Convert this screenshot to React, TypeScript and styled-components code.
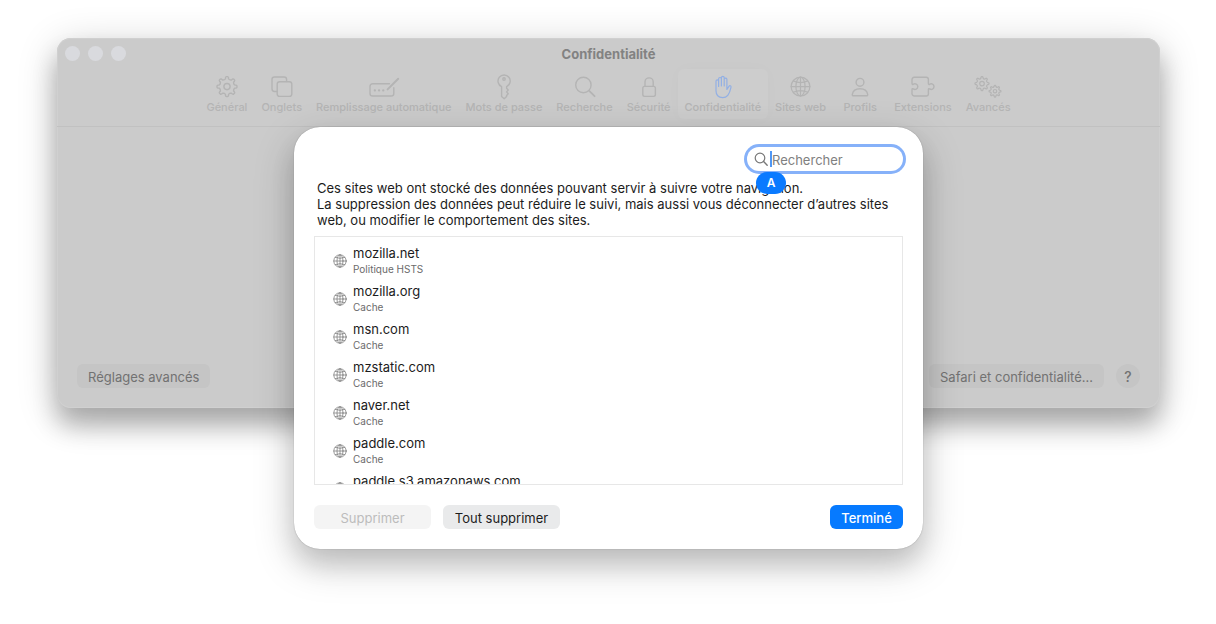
import React from "react";
import styled, { createGlobalStyle, css } from "styled-components";

const GlobalStyle = createGlobalStyle`
  *, *::before, *::after { box-sizing: border-box; }
  body {
    margin: 0;
    background: #fff;
    font-family: Inter, "Liberation Sans", sans-serif;
    font-size: 13px;
    line-height: 16px;
    color: #1c1c1c;
  }
  button, input { font: inherit; }
`;

const Stage = styled.main`
  display: grid;
  padding: 38px 56px 75px 57px;
`;

const Window = styled.section`
  grid-area: 1 / 1;
  align-self: start;
  display: flex;
  flex-direction: column;
  min-width: 0;
  min-height: 370px;
  border-radius: 14px;
  background: #cbcbcb;
  box-shadow:
    inset 0 0 0 1px #d0d0d0,
    0 18px 24px rgba(0, 0, 0, 0.24),
    0 8px 40px rgba(0, 0, 0, 0.2);
`;

const TitleBar = styled.header`
  display: grid;
  grid-template-columns: 1fr auto 1fr;
  align-items: center;
  height: 31px;
  padding: 0 8px;
`;

const Lights = styled.div`
  display: flex;
  gap: 8px;
`;

const Light = styled.button`
  width: 15px;
  height: 15px;
  padding: 0;
  border: 0;
  border-radius: 50%;
  background: #d9dade;
`;

const Title = styled.h1`
  margin: 0;
  font-size: 13px;
  font-weight: 700;
  line-height: 16px;
  color: #828282;
`;

const Toolbar = styled.nav`
  display: flex;
  justify-content: center;
  padding-bottom: 7px;
  border-bottom: 1px solid #c1c1c1;
`;

const Tab = styled.button<{ $active?: boolean }>`
  display: flex;
  flex-direction: column;
  align-items: center;
  min-width: 54px;
  padding: 5px 7px;
  border: 0;
  border-radius: 6px;
  background: transparent;
  color: #b4b4b4;
  font-size: 11px;
  font-weight: 500;
  line-height: 14px;
  white-space: nowrap;
  ${(p) =>
    p.$active &&
    css`
      background: #cdcdcd;
      box-shadow: 0 0 16px rgba(0, 0, 0, 0.02);
      svg { color: #93b0e4; }
    `}
`;

const WindowFooter = styled.footer`
  display: flex;
  align-items: center;
  gap: 12px;
  margin-top: auto;
  padding: 20px;
`;

const GreyButton = styled.button<{ $end?: boolean }>`
  height: 24px;
  margin-left: ${(p) => (p.$end ? "auto" : "0")};
  padding: 2px 11px 0;
  border: 0;
  border-radius: 6px;
  background: #c5c5c5;
  color: #727272;
`;

const HelpButton = styled(GreyButton)`
  width: 24px;
  padding: 2px 0 0;
  border-radius: 50%;
  font-size: 14px;
  font-weight: 500;
`;

const Sheet = styled.section`
  grid-area: 1 / 1;
  place-self: start center;
  display: flex;
  flex-direction: column;
  width: 100%;
  max-width: 629px;
  margin-top: 89px;
  padding: 20px;
  border-radius: 26px;
  background: #fff;
  box-shadow:
    0 0 1px rgba(0, 0, 0, 0.4),
    0 16px 24px rgba(0, 0, 0, 0.1),
    0 14px 40px rgba(0, 0, 0, 0.22);
`;

const Search = styled.label`
  position: relative;
  align-self: flex-end;
  display: flex;
  align-items: center;
  width: 156px;
  height: 24px;
  padding-left: 6px;
  border-radius: 12px;
  background: #fff;
  color: #777;
  box-shadow: 0 0 0 3px #86b1f9;
`;

const Caret = styled.span`
  width: 2px;
  height: 16px;
  margin-left: 1px;
  background: #4f97f5;
`;

const SearchInput = styled.input`
  flex: 1;
  min-width: 0;
  padding: 1px 0 0;
  border: 0;
  outline: 0;
  background: transparent;
  color: #1c1c1c;
  &::placeholder { color: #808080; opacity: 1; }
`;

const CapsBadge = styled.span`
  position: absolute;
  top: 25px;
  left: 9px;
  width: 30px;
  border-radius: 11px;
  background: #0a7aff;
  color: #fff;
  font-size: 12px;
  font-weight: 600;
  line-height: 22px;
  text-align: center;
`;

const Notice = styled.p`
  margin: 9px 0 8px;
  padding: 0 3px;
`;

const SiteList = styled.ul`
  height: 249px;
  margin: 0 0 20px;
  padding: 8px 18px;
  border: 1px solid #e7e7e7;
  list-style: none;
  overflow-y: auto;
  scrollbar-width: none;
`;

const SiteRow = styled.li`
  display: flex;
  align-items: center;
  gap: 6px;
  padding-bottom: 7px;
  color: #808080;
`;

const SiteText = styled.div`
  display: grid;
  gap: 1px;
`;

const SiteName = styled.span`
  color: #1c1c1c;
`;

const SiteKind = styled.span`
  font-size: 10px;
  line-height: 14px;
  color: #6b6b6b;
`;

const Actions = styled.footer`
  display: flex;
  gap: 12px;
`;

const ActionButton = styled.button<{ $primary?: boolean }>`
  min-width: ${(p) => (p.$primary ? "73px" : "117px")};
  height: 24px;
  margin-left: ${(p) => (p.$primary ? "auto" : "0")};
  padding: 2px 11px 0;
  border: 0;
  border-radius: 6px;
  background: ${(p) => (p.$primary ? "#067aff" : "#e9eaeb")};
  color: ${(p) => (p.$primary ? "#fff" : "#1c1c1c")};
  font-weight: ${(p) => (p.$primary ? 500 : 400)};
  &:disabled { background: #f4f4f4; color: #bcbcbc; }
`;

const IconSvg = styled.svg`
  display: block;
  flex: none;
  fill: none;
  stroke: currentColor;
  stroke-width: 1.4;
  stroke-linecap: round;
  stroke-linejoin: round;
`;

/* Outline of a cog: teeth alternate between the outer and the inner radius. */
function cogPath(cx: number, cy: number, outer: number, inner: number, teeth = 8) {
  const step = (Math.PI * 2) / teeth;
  const at = (r: number, a: number) =>
    `${(cx + r * Math.sin(a)).toFixed(2)} ${(cy - r * Math.cos(a)).toFixed(2)}`;
  let d = "";
  for (let i = 0; i < teeth; i++) {
    const a = i * step;
    d += `${i ? "L" : "M"}${at(inner, a - step * 0.25)}`;
    d += `L${at(outer - 0.8, a - step * 0.2)}Q${at(outer, a - step * 0.17)} ${at(outer, a - step * 0.08)}`;
    d += `L${at(outer, a + step * 0.08)}Q${at(outer, a + step * 0.17)} ${at(outer - 0.8, a + step * 0.2)}`;
    d += `L${at(inner, a + step * 0.25)}Q${at(inner - 1, a + step * 0.5)} ${at(inner, a + step * 0.75)}`;
  }
  return d + "Z";
}

const drawings: Record<string, React.ReactNode> = {
  gear: (
    <>
      <path d={cogPath(14, 12.6, 10, 7.9)} />
      <circle cx="14" cy="12.6" r="3.1" />
    </>
  ),
  tabs: (
    <>
      <path d="M9 17.5H6.4a2.4 2.4 0 0 1-2.4-2.4V5.4A2.4 2.4 0 0 1 6.4 3h9.8a2.4 2.4 0 0 1 2.4 2.4V7.6" />
      <rect x="9.2" y="7.8" width="14.6" height="14.6" rx="2.4" />
    </>
  ),
  autofill: (
    <>
      <path d="M19.5 9.8H2.6A2.6 2.6 0 0 0 0 12.4v7A2.6 2.6 0 0 0 2.6 22h18.6a2.6 2.6 0 0 0 2.6-2.6v-5.6" />
      <path d="M17.6 15.4 28.2 4.8" strokeWidth="2" />
      <path d="M4.8 16.4h.1M9 16.4h.1M13.2 16.4h.1" strokeWidth="2.2" />
    </>
  ),
  key: (
    <>
      <path d="M11.6 12.6a6.1 6.1 0 1 1 5 0v1.6l1.6 1.8-1.6 1.9 1.6 1.8-1.6 1.7v1l-2.4 2.4-2.6-2.4Z" />
      <circle cx="14" cy="5" r="1.2" />
    </>
  ),
  search: (
    <>
      <circle cx="12.4" cy="11" r="7.7" />
      <path d="m18.2 16.8 5.4 5.4" strokeWidth="1.8" />
    </>
  ),
  lock: (
    <>
      <rect x="7.8" y="12.4" width="12.6" height="10" rx="1.8" />
      <path d="M10 12.2V8a4.1 4.1 0 0 1 8.2 0v4.2" />
    </>
  ),
  hand: (
    <path
      strokeWidth="1.2"
      d="M7 14V7.200a1.300 1.300 0 0 1 2.600 0v5.200V4.900a1.400 1.400 0 0 1 2.800 0v7V3.700a1.400 1.400 0 0 1 2.800 0v8.200V5.200a1.400 1.400 0 0 1 2.700 0v10.200l2-3.100c.7-1 2.500-.7 2.100 1-.7 3.200-1.500 5.900-3.200 8-1.300 1.600-3.100 2.300-5.200 2.300C9.300 23.600 7 21 7 16.800Z"
    />
  ),
  globe: (
    <g strokeWidth="1.200">
      <circle cx="13.500" cy="12.6" r="9.400" />
      <ellipse cx="13.500" cy="12.6" rx="4.600" ry="9.400" />
      <path d="M13.500 3.200v18.800M4.100 12.600h18.800M6.200 6.900q7.300 3.300 14.600 0M6.200 18.300q7.300-3.300 14.600 0" />
    </g>
  ),
  person: (
    <>
      <circle cx="14" cy="8.300" r="3.900" />
      <path d="M7.600 21.800c-.9 0-1.500-.5-1.300-1.500.6-3.200 3.700-5.500 7.700-5.500s7.100 2.300 7.700 5.500c.2 1-.4 1.500-1.300 1.500Z" />
    </>
  ),
  puzzle: (
    <path d="M3 9.300V5.500a2.200 2.200 0 0 1 2.200-2.200h12a2.200 2.200 0 0 1 2.200 2.200v4.200c0 .8.600 1 1.200.6 2-1.400 4.400-.1 4.400 2.300s-2.400 3.700-4.400 2.300c-.6-.4-1.200-.2-1.200.6v4.300a2.200 2.200 0 0 1-2.200 2.200h-12A2.200 2.200 0 0 1 3 19.800v-4.300c0-.8.600-1 1.200-.6 2 1.400 4.600.1 4.600-2.300s-2.600-3.700-4.600-2.300c-.6.4-1.200.2-1.200-1Z" />
  ),
  gears: (
    <g strokeWidth="1.200">
      <path d={cogPath(8, 9.600, 7, 5.600)} />
      <circle cx="8" cy="9.600" r="2.300" />
      <path d={cogPath(21, 17.200, 5.900, 4.700)} />
      <circle cx="21" cy="17.200" r="1.700" />
    </g>
  ),
};

const tabs = [
  { label: "Général", icon: "gear" },
  { label: "Onglets", icon: "tabs" },
  { label: "Remplissage automatique", icon: "autofill" },
  { label: "Mots de passe", icon: "key" },
  { label: "Recherche", icon: "search" },
  { label: "Sécurité", icon: "lock" },
  { label: "Confidentialité", icon: "hand" },
  { label: "Sites web", icon: "globe" },
  { label: "Profils", icon: "person" },
  { label: "Extensions", icon: "puzzle" },
  { label: "Avancés", icon: "gears" },
];

const sites = [
  { name: "mozilla.net", kind: "Politique HSTS" },
  { name: "mozilla.org", kind: "Cache" },
  { name: "msn.com", kind: "Cache" },
  { name: "mzstatic.com", kind: "Cache" },
  { name: "naver.net", kind: "Cache" },
  { name: "paddle.com", kind: "Cache" },
  { name: "paddle.s3.amazonaws.com", kind: "Cache" },
];

export default function App() {
  return (
    <>
      <GlobalStyle />
      <Stage>
        <Window>
          <TitleBar>
            <Lights>
              <Light type="button" aria-label="Fermer" />
              <Light type="button" aria-label="Réduire" />
              <Light type="button" aria-label="Agrandir" />
            </Lights>
            <Title>Confidentialité</Title>
          </TitleBar>
          <Toolbar>
            {tabs.map((t) => (
              <Tab key={t.label} type="button" $active={t.icon === "hand"}>
                <IconSvg width="28" height="26" viewBox="0 0 28 26" overflow="visible" aria-hidden="true">
                  {drawings[t.icon]}
                </IconSvg>
                {t.label}
              </Tab>
            ))}
          </Toolbar>
          <WindowFooter>
            <GreyButton type="button">Réglages avancés</GreyButton>
            <GreyButton type="button" $end>Safari et confidentialité…</GreyButton>
            <HelpButton type="button">?</HelpButton>
          </WindowFooter>
        </Window>

        <Sheet role="dialog" aria-label="Données de sites web">
          <Search>
            <IconSvg width="16" height="16" viewBox="0 0 16 16" aria-hidden="true">
              <circle cx="7" cy="7" r="4.800" strokeWidth="1.2" />
              <path d="m10.600 10.600 3.600 3.600" strokeWidth="1.400" />
            </IconSvg>
            <Caret />
            <SearchInput type="text" placeholder="Rechercher" aria-label="Rechercher" />
            <CapsBadge>A</CapsBadge>
          </Search>
          <Notice>
            Ces sites web ont stocké des données pouvant servir à suivre votre navigation.
            <br />
            La suppression des données peut réduire le suivi, mais aussi vous déconnecter d’autres sites
            web, ou modifier le comportement des sites.
          </Notice>
          <SiteList>
            {sites.map((s) => (
              <SiteRow key={s.name}>
                <IconSvg width="14" height="14" viewBox="0 0 14 14" aria-hidden="true">
                  <g strokeWidth="0.8">
                    <circle cx="7" cy="7" r="6.200" />
                    <ellipse cx="7" cy="7" rx="3" ry="6.200" />
                    <path d="M7 .8v12.400M.8 7h12.400M2.200 3.400q4.800 2 9.600 0M2.200 10.600q4.800-2 9.600 0" />
                  </g>
                </IconSvg>
                <SiteText>
                  <SiteName>{s.name}</SiteName>
                  <SiteKind>{s.kind}</SiteKind>
                </SiteText>
              </SiteRow>
            ))}
          </SiteList>
          <Actions>
            <ActionButton type="button" disabled>Supprimer</ActionButton>
            <ActionButton type="button">Tout supprimer</ActionButton>
            <ActionButton type="button" $primary>Terminé</ActionButton>
          </Actions>
        </Sheet>
      </Stage>
    </>
  );
}
